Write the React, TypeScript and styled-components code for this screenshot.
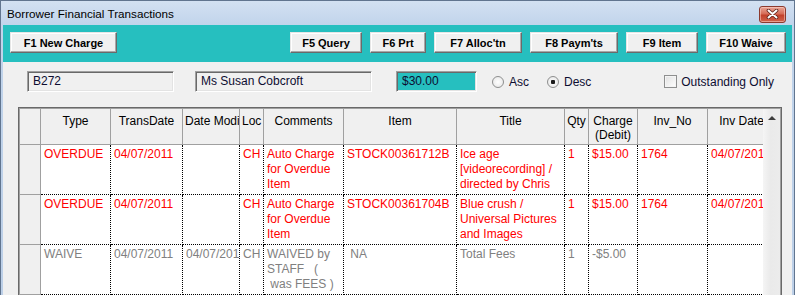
import styled, { createGlobalStyle } from "styled-components";

type Tone = "red" | "gray";

interface Column {
  label: string;
  width: number;
}

interface Transaction {
  id: number;
  tone: Tone;
  cells: string[];
}

const columns: Column[] = [
  { label: "Type", width: 70 },
  { label: "TransDate", width: 72 },
  { label: "Date Modified", width: 57 },
  { label: "Loc", width: 24 },
  { label: "Comments", width: 80 },
  { label: "Item", width: 113 },
  { label: "Title", width: 108 },
  { label: "Qty", width: 24 },
  { label: "Charge\n(Debit)", width: 49 },
  { label: "Inv_No", width: 70 },
  { label: "Inv Date", width: 68 },
];

const transactions: Transaction[] = [
  {
    id: 1,
    tone: "red",
    cells: [
      "OVERDUE",
      "04/07/2011",
      "",
      "CH",
      "Auto Charge\nfor Overdue\nItem",
      "STOCK00361712B",
      "Ice age\n[videorecording] /\ndirected by Chris",
      "1",
      "$15.00",
      "1764",
      "04/07/2011",
    ],
  },
  {
    id: 2,
    tone: "red",
    cells: [
      "OVERDUE",
      "04/07/2011",
      "",
      "CH",
      "Auto Charge\nfor Overdue\nItem",
      "STOCK00361704B",
      "Blue crush /\nUniversal Pictures\nand Images",
      "1",
      "$15.00",
      "1764",
      "04/07/2011",
    ],
  },
  {
    id: 3,
    tone: "gray",
    cells: [
      "WAIVE",
      "04/07/2011",
      "04/07/2011",
      "CH",
      "WAIVED by\nSTAFF   (\n was FEES )",
      " NA",
      "Total Fees",
      "1",
      "-$5.00",
      "",
      "",
    ],
  },
];

const rightButtons = [
  { label: "F5 Query", width: 72 },
  { label: "F6 Prt", width: 56 },
  { label: "F7 Alloc'tn", width: 88 },
  { label: "F8 Paym'ts", width: 88 },
  { label: "F9 Item", width: 72 },
  { label: "F10 Waive", width: 80 },
];

const gridTemplate = `21px ${columns.map((c) => `${c.width}px`).join(" ")}`;

export default function App() {
  return (
    <>
      <GlobalStyle />
      <Window>
        <TitleBar>
          <Title>Borrower Financial Transactions</Title>
          <CloseButton aria-label="Close">
            <svg width="13" height="10" viewBox="0 0 13 10">
              <path d="M2.5 1.5 L10.5 8.5 M10.5 1.5 L2.5 8.5" stroke="#5a2018" strokeWidth="3.6" strokeLinecap="round" />
              <path d="M2.5 1.5 L10.5 8.5 M10.5 1.5 L2.5 8.5" stroke="#ffffff" strokeWidth="2" strokeLinecap="round" />
            </svg>
          </CloseButton>
        </TitleBar>

        <Toolbar>
          <ToolButton $width={107}>F1 New Charge</ToolButton>
          <ButtonGroup>
            {rightButtons.map((b) => (
              <ToolButton key={b.label} $width={b.width}>
                {b.label}
              </ToolButton>
            ))}
          </ButtonGroup>
        </Toolbar>

        <Content>
          <FilterRow>
            <Field $width={147} $offset={9}>B272</Field>
            <Field $width={177} $offset={21}>Ms Susan Cobcroft</Field>
            <Field $width={81} $offset={24} $highlight>
              $30.00
            </Field>
            <Option $offset={15}>
              <Radio />
              Asc
            </Option>
            <Option $offset={18}>
              <Radio $checked />
              Desc
            </Option>
            <CheckOption>
              <CheckBox />
              Outstanding Only
            </CheckOption>
          </FilterRow>

          <Grid>
            <GridInner>
              <Viewport>
                <HeaderRow>
                  <HeaderCell />
                  {columns.map((c) => (
                    <HeaderCell key={c.label}>{c.label}</HeaderCell>
                  ))}
                </HeaderRow>
                {transactions.map((t) => (
                  <BodyRow key={t.id}>
                    <SelectorCell />
                    {t.cells.map((value, i) => (
                      <Cell key={i} $tone={t.tone}>
                        {value}
                      </Cell>
                    ))}
                  </BodyRow>
                ))}
              </Viewport>
              <Scrollbar>
                <ScrollArrow />
              </Scrollbar>
            </GridInner>
          </Grid>
        </Content>
      </Window>
    </>
  );
}

const GlobalStyle = createGlobalStyle`
  html, body {
    margin: 0;
    padding: 0;
    background: #ffffff;
  }
  body {
    font-family: "Liberation Sans", Arial, sans-serif;
    font-size: 12px;
    color: #000;
  }
`;

const Window = styled.div`
  width: 795px;
  height: 295px;
  box-sizing: border-box;
  border: 1px solid #61758f;
  border-bottom: none;
  padding: 0 2px;
  background: linear-gradient(#d3e1f2 0, #c1d4eb 24px, #bccfe7 100%);
  overflow: hidden;
  display: flex;
  flex-direction: column;
`;

const TitleBar = styled.div`
  height: 24px;
  display: flex;
  align-items: center;
  justify-content: space-between;
  padding: 0 6px 0 4px;
`;

const Title = styled.div`
  font-size: 11.7px;
  color: #000;
  padding-top: 1px;
`;

const CloseButton = styled.button`
  width: 27px;
  height: 17px;
  margin-top: 2px;
  padding: 0;
  display: flex;
  align-items: center;
  justify-content: center;
  border: 1px solid #8c3a2e;
  border-radius: 3px;
  background: linear-gradient(#e9a596 0, #d66d58 45%, #c2412b 55%, #d0634c 100%);
  box-shadow: inset 0 0 0 1px rgba(255, 220, 210, 0.5);
`;

const Toolbar = styled.div`
  height: 37px;
  box-sizing: border-box;
  padding: 7px 6px 0 7px;
  background: #26bfbf;
  display: flex;
  justify-content: space-between;
  align-items: flex-start;
`;

const ButtonGroup = styled.div`
  display: flex;
  gap: 8px;
`;

const ToolButton = styled.button<{ $width: number }>`
  width: ${(p) => p.$width}px;
  height: 21px;
  padding: 0;
  box-sizing: border-box;
  border: 1px solid;
  border-color: #e6e6e6 #6a6a6a #6a6a6a #e6e6e6;
  box-shadow: inset -1px -1px #a8a8a8, inset 1px 1px #ffffff;
  background: #f0f0f0;
  font-family: "Liberation Sans", Arial, sans-serif;
  font-size: 11px;
  font-weight: bold;
  color: #000;
  text-align: center;
`;

const Content = styled.div`
  flex: 1;
  min-height: 0;
  background: #f0f0f0;
  padding: 9px 10px 0 15px;
  display: flex;
  flex-direction: column;
`;

const FilterRow = styled.div`
  height: 21px;
  display: flex;
  align-items: center;
  padding-right: 8px;
`;

const Field = styled.div<{ $width: number; $offset: number; $highlight?: boolean }>`
  width: ${(p) => p.$width}px;
  height: 21px;
  margin-left: ${(p) => p.$offset}px;
  box-sizing: border-box;
  border: 1px solid;
  border-color: #a0a0a0 #ffffff #ffffff #a0a0a0;
  box-shadow: inset 1px 1px #696969, inset -1px -1px #e3e3e3;
  background: ${(p) => (p.$highlight ? "#26bfbf" : "#f0f0f0")};
  padding-left: 5px;
  line-height: 19px;
  font-size: 12px;
  color: #0d0d30;
  white-space: nowrap;
  overflow: hidden;
`;

const Option = styled.label<{ $offset: number }>`
  margin-left: ${(p) => p.$offset}px;
  display: flex;
  align-items: center;
  gap: 5px;
  font-size: 12px;
  color: #0d0d30;
`;

const Radio = styled.span<{ $checked?: boolean }>`
  width: 12px;
  height: 12px;
  box-sizing: border-box;
  border: 1px solid #8e8f8f;
  border-radius: 50%;
  background: radial-gradient(circle at 50% 50%, ${(p) => (p.$checked ? "#1a1a1a 0, #1a1a1a 2px, #f4f4f4 2.5px" : "#ffffff 0")}, #e4e4e4 100%);
`;

const CheckOption = styled.label`
  margin-left: auto;
  display: flex;
  align-items: center;
  gap: 4px;
  font-size: 12px;
  color: #0d0d30;
`;

const CheckBox = styled.span`
  width: 13px;
  height: 13px;
  box-sizing: border-box;
  border: 1px solid #8e8f8f;
  background: linear-gradient(135deg, #e0e0e0, #ffffff);
  box-shadow: inset 0 0 0 1px #f4f4f4;
`;

const Grid = styled.div`
  margin-top: 15px;
  flex: 1;
  min-height: 0;
  width: 764px;
  box-sizing: border-box;
  border: 1px solid #696969;
  border-bottom: none;
`;

const GridInner = styled.div`
  height: 100%;
  box-sizing: border-box;
  border: 1px solid #a0a0a0;
  border-bottom: none;
  display: flex;
`;

const Viewport = styled.div`
  width: 743px;
  overflow: hidden;
  background: #ffffff;
`;

const HeaderRow = styled.div`
  display: grid;
  grid-template-columns: ${gridTemplate};
  width: max-content;
`;

const HeaderCell = styled.div`
  height: 36px;
  box-sizing: border-box;
  padding: 5px 2px 0;
  background: #f0f0f0;
  border-right: 1px solid #a0a0a0;
  border-bottom: 1px solid #a0a0a0;
  text-align: center;
  white-space: pre;
  overflow: hidden;
  line-height: 14px;
  font-size: 12px;
  color: #000;
`;

const BodyRow = styled.div`
  display: grid;
  grid-template-columns: ${gridTemplate};
  width: max-content;
`;

const SelectorCell = styled.div`
  height: 50px;
  box-sizing: border-box;
  background: #f0f0f0;
  border-right: 1px solid #a0a0a0;
  border-bottom: 1px solid #a0a0a0;
`;

const Cell = styled.div<{ $tone: Tone }>`
  height: 50px;
  box-sizing: border-box;
  padding: 2px 3px 0;
  border-right: 1px dotted #000;
  border-bottom: 1px dotted #000;
  white-space: pre;
  overflow: hidden;
  line-height: 15px;
  font-size: 12px;
  color: ${(p) => (p.$tone === "red" ? "#ff0000" : "#808080")};
`;

const Scrollbar = styled.div`
  width: 17px;
  background: linear-gradient(90deg, #f5f5f5 0, #eaeaea 45%, #ececec 100%);
  display: flex;
  flex-direction: column;
  align-items: center;
`;

const ScrollArrow = styled.div`
  margin-top: 7px;
  width: 0;
  height: 0;
  border-left: 4px solid transparent;
  border-right: 4px solid transparent;
  border-bottom: 4px solid #3c3c3c;
`;
